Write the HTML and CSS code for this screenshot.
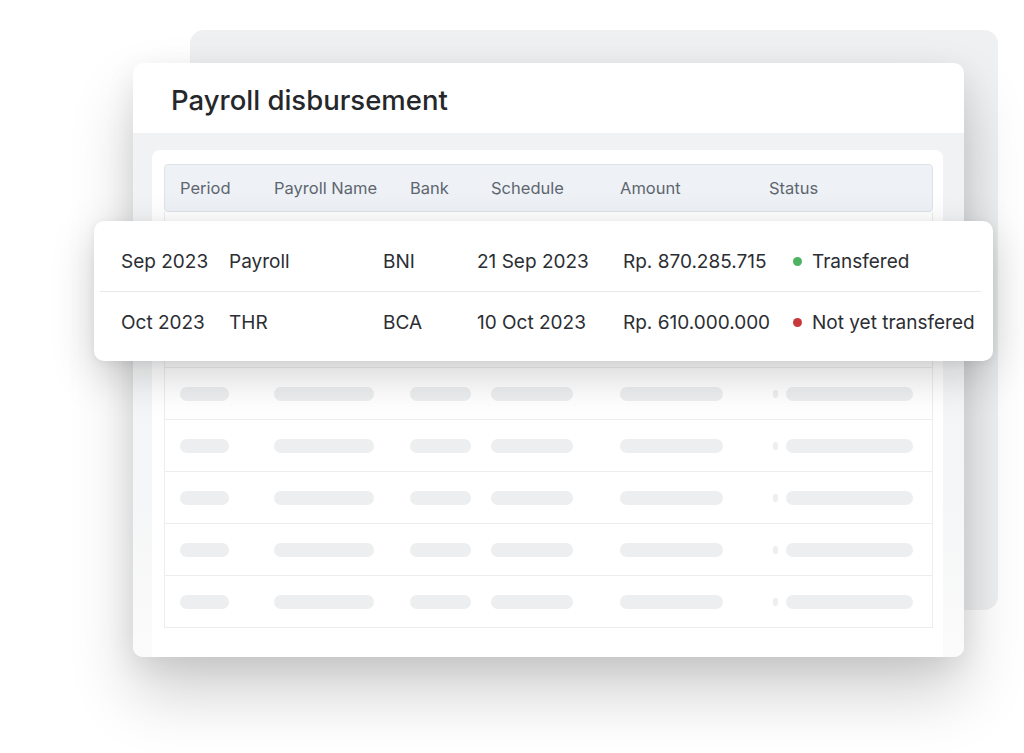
FILE: index.html
```html
<!doctype html>
<html>
	<head>
		<meta http-equiv="Content-Type" content="text/html; charset=utf-8" />
		<title>Payroll disbursement</title>
		<link rel="stylesheet" href="styles.css">
	</head>
	<body>
		<div class="stage">
			<div class="back_card"></div>
			<div class="main_card">
				<div class="main_card__head">
					<h1>Payroll disbursement</h1>
				</div>
				<div class="main_card__body">
					<div class="panel">
						<div class="table">
							<div class="table__cols table__head">
								<span>Period</span>
								<span>Payroll Name</span>
								<span>Bank</span>
								<span>Schedule</span>
								<span>Amount</span>
								<span>Status</span>
							</div>
							<div class="table__cols sk_row"><i class="sk w49"></i><i class="sk w100"></i><i class="sk w61"></i><i class="sk w82"></i><i class="sk w103"></i><span class="sk_status"><i class="sk_dot"></i><i class="sk w127"></i></span></div>
							<div class="table__cols sk_row"><i class="sk w49"></i><i class="sk w100"></i><i class="sk w61"></i><i class="sk w82"></i><i class="sk w103"></i><span class="sk_status"><i class="sk_dot"></i><i class="sk w127"></i></span></div>
							<div class="table__cols sk_row"><i class="sk w49"></i><i class="sk w100"></i><i class="sk w61"></i><i class="sk w82"></i><i class="sk w103"></i><span class="sk_status"><i class="sk_dot"></i><i class="sk w127"></i></span></div>
							<div class="table__cols sk_row"><i class="sk w49"></i><i class="sk w100"></i><i class="sk w61"></i><i class="sk w82"></i><i class="sk w103"></i><span class="sk_status"><i class="sk_dot"></i><i class="sk w127"></i></span></div>
							<div class="table__cols sk_row"><i class="sk w49"></i><i class="sk w100"></i><i class="sk w61"></i><i class="sk w82"></i><i class="sk w103"></i><span class="sk_status"><i class="sk_dot"></i><i class="sk w127"></i></span></div>
							<div class="table__cols sk_row"><i class="sk w49"></i><i class="sk w100"></i><i class="sk w61"></i><i class="sk w82"></i><i class="sk w103"></i><span class="sk_status"><i class="sk_dot"></i><i class="sk w127"></i></span></div>
							<div class="table__cols sk_row"><i class="sk w49"></i><i class="sk w100"></i><i class="sk w61"></i><i class="sk w82"></i><i class="sk w103"></i><span class="sk_status"><i class="sk_dot"></i><i class="sk w127"></i></span></div>
							<div class="table__cols sk_row"><i class="sk w49"></i><i class="sk w100"></i><i class="sk w61"></i><i class="sk w82"></i><i class="sk w103"></i><span class="sk_status"><i class="sk_dot"></i><i class="sk w127"></i></span></div>
						</div>
					</div>
				</div>
			</div>
			<div class="float_card">
				<div class="float_row">
					<span>Sep 2023</span>
					<span>Payroll</span>
					<span>BNI</span>
					<span>21 Sep 2023</span>
					<span>Rp. 870.285.715</span>
					<span class="status"><i class="dot dot--green"></i>Transfered</span>
				</div>
				<div class="float_row">
					<span>Oct 2023</span>
					<span>THR</span>
					<span>BCA</span>
					<span>10 Oct 2023</span>
					<span>Rp. 610.000.000</span>
					<span class="status"><i class="dot dot--red"></i>Not yet transfered</span>
				</div>
			</div>
		</div>
	</body>
</html>
```

FILE: styles.css
```css
body {
	margin : 0;
	background : #ffffff;
	font-family : Inter, "Noto Sans", "Liberation Sans", sans-serif;
}
.stage {
	position : relative;
	width : 1024px;
	height : 753px;
	overflow : hidden;
	box-sizing : border-box;
	padding : 63px 0 0 133px;
}
.back_card {
	position : absolute;
	left : 190px;
	top : 30px;
	width : 808px;
	height : 580px;
	background : #eef0f2;
	border-radius : 14px;
}
.main_card {
	position : relative;
	width : 831px;
	background : #ffffff;
	border-radius : 10px;
	overflow : hidden;
	box-shadow : 0 36px 64px rgba(0, 0, 0, 0.19), 0 8px 30px rgba(0, 0, 0, 0.08);
}
.main_card__head {
	height : 70px;
	display : flex;
	align-items : center;
	padding-left : 38px;
}
.main_card__head h1 {
	margin : 0;
	font-size : 27.5px;
	font-weight : 500;
	color : #25272a;
	padding-top : 4px;
}
.main_card__body {
	padding : 17px 21px 0 19px;
	background : linear-gradient(#f1f2f3, #f5f6f7 70%, #fbfbfb);
}
.panel {
	background : #ffffff;
	border-radius : 8px 8px 0 0;
	padding : 14px 10px 29px 12px;
}
.table__cols {
	display : grid;
	grid-template-columns : 94px 136px 81px 129px 149px 1fr;
	align-items : center;
	padding-left : 15px;
	box-sizing : border-box;
}
.table__head {
	height : 48px;
	background : #eef2f6;
	border : 1px solid #dde3e9;
	border-radius : 4px;
	font-size : 16.5px;
	color : #5e6670;
}
.sk_row {
	height : 52px;
	border : 1px solid #ebedef;
	border-top : none;
}
.sk {
	display : block;
	height : 14px;
	border-radius : 7px;
	background : #eceeef;
}
.w49 { width : 49px; }
.w61 { width : 61px; }
.w82 { width : 82px; }
.w100 { width : 100px; }
.w103 { width : 103px; }
.w127 { width : 127px; }
.sk_status {
	display : flex;
	align-items : center;
}
.sk_dot {
	display : block;
	width : 5px;
	height : 8px;
	border-radius : 3px;
	background : #eceeef;
	margin : 0 8px 0 4px;
}
.float_card {
	position : absolute;
	left : 94px;
	top : 221px;
	width : 899px;
	height : 140px;
	box-sizing : border-box;
	padding : 10px 12px 10px 6px;
	background : #ffffff;
	border-radius : 10px;
	box-shadow : 0 14px 44px rgba(0, 0, 0, 0.18), 0 2px 10px rgba(0, 0, 0, 0.06);
}
.float_row {
	display : grid;
	grid-template-columns : 108px 154px 94px 146px 170px 1fr;
	align-items : center;
	height : 60px;
	padding-left : 21px;
	font-size : 19px;
	color : #2b2e33;
}
.float_row + .float_row {
	border-top : 1px solid #e6e8ea;
}
.status {
	display : flex;
	align-items : center;
}
.dot {
	display : inline-block;
	width : 9px;
	height : 9px;
	border-radius : 50%;
	margin-right : 10px;
}
.dot--green {
	background : #4cb460;
}
.dot--red {
	background : #c8393b;
}
```
